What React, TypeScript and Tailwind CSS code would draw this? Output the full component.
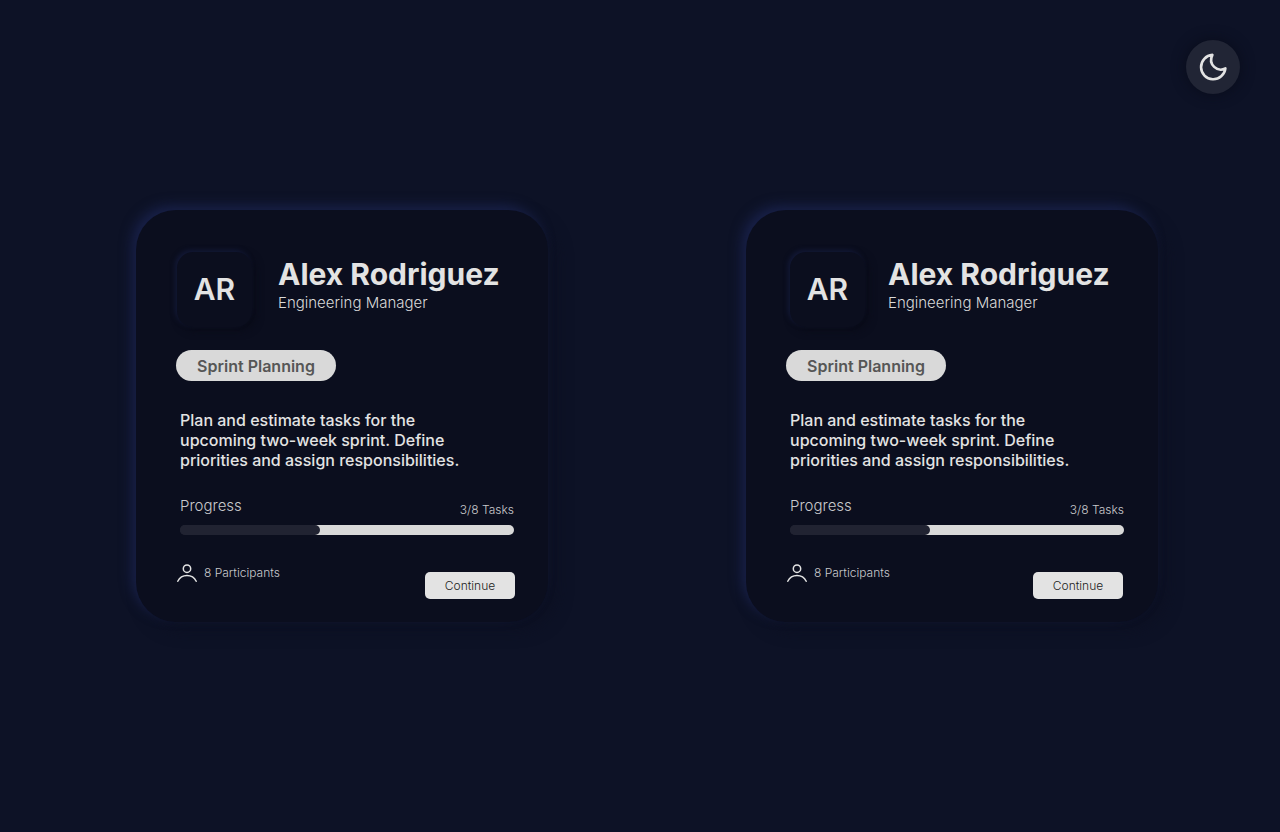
import React from "react";

type Meeting = {
  id: string;
  initials: string;
  name: string;
  role: string;
  topic: string;
  description: string;
  done: number;
  total: number;
  participants: number;
  avatarInset: string;
  footerInset: string;
};

const base = {
  initials: "AR",
  name: "Alex Rodriguez",
  role: "Engineering Manager",
  topic: "Sprint Planning",
  description:
    "Plan and estimate tasks for the upcoming two-week sprint. Define priorities and assign responsibilities.",
  done: 3,
  total: 8,
  participants: 8,
};

const meetings: Meeting[] = [
  { ...base, id: "first", avatarInset: "pl-px", footerInset: "pr-0" },
  { ...base, id: "second", avatarInset: "pl-1", footerInset: "pr-0.5" },
];

function MoonIcon() {
  return (
    <svg viewBox="0 0 28 28" className="size-7" fill="none" stroke="#e3e3e3" strokeWidth="2.6" strokeLinejoin="round" aria-hidden="true">
      <path d="M13.4 1.9A12.2 12.2 0 1 0 26.4 15.4C18.6 19.6 8.6 11.6 13.4 1.9Z" />
    </svg>
  );
}

function PersonIcon() {
  return (
    <svg viewBox="0 0 22 20" className="h-5 w-[22px]" fill="none" stroke="#e3e3e3" strokeWidth="1.5" strokeLinecap="round" aria-hidden="true">
      <circle cx="11" cy="5.7" r="3.7" />
      <path d="M1.8 18.3C3.4 14.9 6.7 12.5 11 12.5S18.6 14.9 20.2 18.3" />
    </svg>
  );
}

function MeetingCard({ meeting }: { meeting: Meeting }) {
  const percent = Math.round((meeting.done / meeting.total) * 100 + 4.5);
  return (
    <article className="w-[412px] rounded-[40px] bg-[#0b0e1e] px-10 pt-[42px] pb-[23px] shadow-[-5px_-5px_12px_#182047,8px_8px_16px_#0c1022]">
      <header className="flex">
        <div className={`w-[102px] shrink-0 ${meeting.avatarInset}`}>
          <div className="flex size-[75px] items-center justify-center rounded-2xl bg-[#0b0e1e] text-[30px] font-semibold text-[#e3e3e3] shadow-[-2px_-2px_5px_#131937,3px_3px_8px_#090b17]">
            {meeting.initials}
          </div>
        </div>
        <div className="pt-1">
          <h2 className="text-[30px] leading-9 font-bold whitespace-nowrap text-[#e3e3e3]">{meeting.name}</h2>
          <p className="mt-px text-[15px] leading-5 font-light text-[#d9d9d9]">{meeting.role}</p>
        </div>
      </header>

      <div className="mt-[23px] flex h-[31px] w-40 items-center justify-center rounded-full bg-[#d9d9d9] text-base font-semibold text-[#565656]">
        {meeting.topic}
      </div>

      <p className="mt-[29px] pr-8 pl-1 text-base leading-5 font-medium text-[#e3e3e3]">{meeting.description}</p>

      <section className="mt-[26px] -mr-2 pl-1">
        <div className="w-[334px]">
          <div className="flex items-end justify-between font-light text-[#c9c9cc]">
            <span className="pb-1 text-[15px] leading-5">Progress</span>
            <span className="text-xs leading-5">{`${meeting.done}/${meeting.total} Tasks`}</span>
          </div>
          <div
            role="progressbar"
            aria-label="Progress"
            aria-valuenow={meeting.done}
            aria-valuemin={0}
            aria-valuemax={meeting.total}
            className="mt-[5px] flex h-2.5 rounded-full bg-[linear-gradient(90deg,#212332_20%,#d9d9d9_20%)]"
          >
            <div className="h-full rounded-full bg-[#212332]" style={{ width: `${percent}%` }} />
          </div>
        </div>
      </section>

      <footer className="mt-7 flex w-[339px] items-start justify-between">
        <div className="flex items-center gap-1.5 text-xs font-light text-[#c9c9cc]">
          <PersonIcon />
          <span>{meeting.participants} Participants</span>
        </div>
        <div className={`pt-[9px] ${meeting.footerInset}`}>
          <button type="button" className="block h-[27px] w-[90px] rounded-[5px] bg-[#e3e3e3] text-xs font-light text-[#1c1c1c]">
            Continue
          </button>
        </div>
      </footer>
    </article>
  );
}

export default function App() {
  return (
    <div className="relative flex min-h-screen items-center justify-center bg-[#0d1226] font-['Inter',sans-serif]">
      <button
        type="button"
        aria-label="Toggle dark mode"
        className="absolute top-10 right-10 flex size-[54px] items-center justify-center rounded-full bg-[#212535] shadow-[0_0_14px_#090c1a]"
      >
        <MoonIcon />
      </button>
      <main className="flex flex-wrap justify-center gap-x-[198px] gap-y-16 py-10 pl-3.5">
        {meetings.map((meeting) => (
          <MeetingCard key={meeting.id} meeting={meeting} />
        ))}
      </main>
    </div>
  );
}
